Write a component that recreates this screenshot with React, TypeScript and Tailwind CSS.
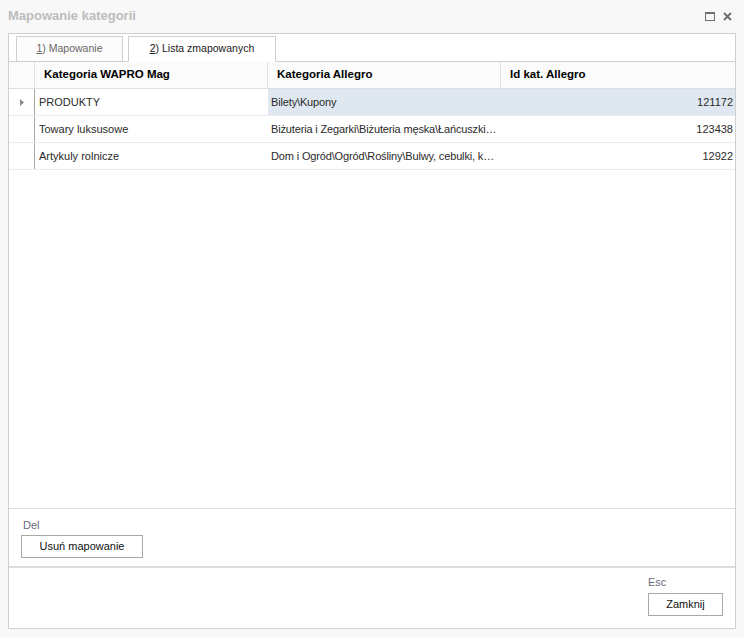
import React from "react";

const rows = [
  { a: "PRODUKTY", b: "Bilety\\Kupony", c: "121172", sel: true },
  { a: "Towary luksusowe", b: "Biżuteria i Zegarki\\Biżuteria męska\\Łańcuszki…", c: "123438" },
  { a: "Artykuly rolnicze", b: "Dom i Ogród\\Ogród\\Rośliny\\Bulwy, cebulki, k…", c: "12922" },
];

export default function App() {
  return (
    <div
      className="w-[744px] h-[637px] bg-[#f8f8f8] flex flex-col text-[11px] text-[#222]"
      style={{ fontFamily: '"Liberation Sans", Arial, sans-serif' }}
    >
      {/* title bar */}
      <div className="h-[33px] flex items-center px-[8px] shrink-0">
        <div className="text-[13px] font-bold text-[#bcbcbc] flex-1 -mt-[1px]">Mapowanie kategorii</div>
        <div className="flex items-center gap-[8px] mr-[4px] -mt-[1px]">
          <svg width="10" height="9" viewBox="0 0 10 9">
            <rect x="0.5" y="0.5" width="9" height="8" fill="none" stroke="#6e6e6e" strokeWidth="1" />
            <rect x="0" y="0" width="10" height="2" fill="#6e6e6e" />
          </svg>
          <svg width="9" height="9" viewBox="0 0 9 9">
            <path d="M1 1 L8 8 M8 1 L1 8" stroke="#6e6e6e" strokeWidth="1.8" />
          </svg>
        </div>
      </div>

      {/* panel */}
      <div className="mx-[8px] h-[596px] border border-[#cfcfcf] bg-white flex flex-col">
        {/* tabs */}
        <div className="h-[28px] shrink-0 flex items-end pl-[7px] gap-[5px] border-b border-[#cfcfcf]">
          <div className="w-[107px] h-[26px] -mb-[1px] border border-[#cfcfcf] bg-[#fcfcfc] flex items-center justify-center text-[10.5px] text-[#666]">
            <span><span className="underline">1</span>) Mapowanie</span>
          </div>
          <div className="w-[148px] h-[26px] -mb-[1px] border border-[#cfcfcf] border-b-white bg-white flex items-center justify-center text-[10.5px] text-[#222]">
            <span><span className="underline">2</span>) Lista zmapowanych</span>
          </div>
        </div>

        {/* grid header */}
        <div className="h-[27px] shrink-0 flex border-b border-[#dedede] bg-[#fbfbfb] font-bold text-[11.5px] text-black">
          <div className="w-[26px] border-r border-[#e2e2e2]" />
          <div className="w-[233px] border-r border-[#e2e2e2] flex items-center pl-[9px]">Kategoria WAPRO Mag</div>
          <div className="w-[233px] border-r border-[#e2e2e2] flex items-center pl-[9px]">Kategoria Allegro</div>
          <div className="flex-1 flex items-center pl-[9px]">Id kat. Allegro</div>
        </div>

        {/* rows */}
        <div className="flex-1 flex flex-col">
          {rows.map((r, i) => (
            <div key={i} className="h-[27px] shrink-0 flex border-b border-[#ececec] text-[#2a2a2a] whitespace-nowrap">
              <div className="w-[26px] border-r border-[#a9a9a9] flex items-center justify-center pl-[1px]">
                {r.sel && (
                  <svg width="4" height="7" viewBox="0 0 4 7">
                    <path d="M0 0 L4 3.5 L0 7 Z" fill="#8a8a8a" />
                  </svg>
                )}
              </div>
              <div className="w-[233px] flex items-center pl-[4px] overflow-hidden">{r.a}</div>
              <div className={`w-[233px] flex items-center pl-[3px] overflow-hidden tracking-[-0.15px] ${r.sel ? "bg-[#dfe8f1]" : ""}`}>{r.b}</div>
              <div className={`flex-1 flex items-center justify-end pr-[2px] ${r.sel ? "bg-[#dfe8f1]" : ""}`}>{r.c}</div>
            </div>
          ))}
        </div>

        {/* bottom section 1 */}
        <div className="h-[58px] shrink-0 border-t border-[#dedede] pl-[12px] pt-[9px] flex flex-col">
          <div className="text-[#6a6a7c] leading-[14px] pl-[2px]">Del</div>
          <button className="mt-[3px] w-[122px] h-[23px] border border-[#a8a8a8] bg-white text-[#111] flex items-center justify-center">
            Usuń mapowanie
          </button>
        </div>

        {/* bottom section 2 */}
        <div className="h-[62px] shrink-0 border-t-2 border-[#dcdcdc] flex flex-col items-end pr-[12px] pt-[7px]">
          <div className="w-[75px] text-[#6a6a7c] leading-[14px]">Esc</div>
          <button className="mt-[4px] w-[75px] h-[23px] border border-[#a8a8a8] bg-white text-[#111] flex items-center justify-center">
            Zamknij
          </button>
        </div>
      </div>
    </div>
  );
}
